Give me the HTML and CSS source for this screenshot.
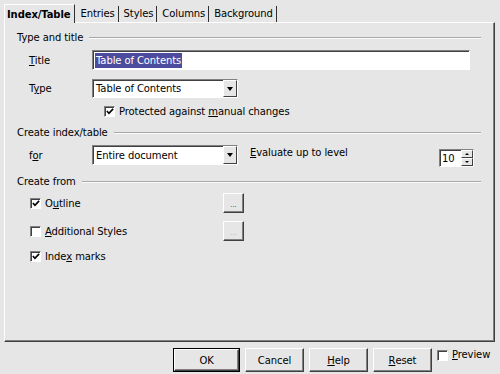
FILE: index.html
```html
<!DOCTYPE html>
<html lang="en">
<head>
    <meta charset="UTF-8">
    <title>Insert Index/Table</title>
    <link rel="stylesheet" href="styles.css">
</head>
<body>
    <div class="tabs">
        <span class="tab active">Index/Table</span>
        <span class="tab">Entries</span>
        <span class="tab">Styles</span>
        <span class="tab">Columns</span>
        <span class="tab">Background</span>
    </div>

    <div class="panel">
        <div class="group-title g1"><span>Type and title</span></div>
        <div class="row row-title">
            <span class="label"><u>T</u>itle</span>
            <div class="field field-wide"><span class="selected">Table of Contents</span></div>
        </div>
        <div class="row row-type">
            <span class="label">T<u>y</u>pe</span>
            <div class="combo">
                <span class="combo-text">Table of Contents</span>
                <span class="combo-btn"><i class="arrow-down"></i></span>
            </div>
        </div>
        <div class="row row-protect">
            <span class="check on"><svg width="9" height="9" viewBox="0 0 9 9"><path d="M1 4 L3.3 6.5 L8 1.5" fill="none" stroke="#000" stroke-width="1.8"/></svg></span>
            <span>Protected against <u>m</u>anual changes</span>
        </div>

        <div class="group-title g2"><span>Create index/table</span></div>
        <div class="row row-for">
            <span class="label">f<u>o</u>r</span>
            <div class="combo">
                <span class="combo-text">Entire document</span>
                <span class="combo-btn"><i class="arrow-down"></i></span>
            </div>
            <span class="evaluate"><u>E</u>valuate up to level</span>
            <div class="spin">
                <span class="spin-text">10</span>
                <span class="spin-btns">
                    <span class="spin-btn"><i class="arrow-up"></i></span>
                    <span class="spin-btn"><i class="arrow-down small"></i></span>
                </span>
            </div>
        </div>

        <div class="group-title g3"><span>Create from</span></div>
        <div class="row row-source r1">
            <span class="source">
                <span class="check on"><svg width="9" height="9" viewBox="0 0 9 9"><path d="M1 4 L3.3 6.5 L8 1.5" fill="none" stroke="#000" stroke-width="1.8"/></svg></span>
                <span>O<u>u</u>tline</span>
            </span>
            <span class="dots-btn">...</span>
        </div>
        <div class="row row-source r2">
            <span class="source">
                <span class="check"></span>
                <span><u>A</u>dditional Styles</span>
            </span>
            <span class="dots-btn disabled">...</span>
        </div>
        <div class="row row-marks">
            <span class="check on"><svg width="9" height="9" viewBox="0 0 9 9"><path d="M1 4 L3.3 6.5 L8 1.5" fill="none" stroke="#000" stroke-width="1.8"/></svg></span>
            <span>Inde<u>x</u> marks</span>
        </div>
    </div>

    <div class="buttons">
        <span class="btn default"><span class="btn-inner">OK</span></span>
        <span class="btn">Cancel</span>
        <span class="btn"><u>H</u>elp</span>
        <span class="btn"><u>R</u>eset</span>
        <span class="preview">
            <span class="check"></span>
            <span><u>P</u>review</span>
        </span>
    </div>
</body>
</html>
```

FILE: styles.css
```css
body {
    margin: 0;
    width: 500px;
    height: 374px;
    background: #e6e6e6;
    font-family: "DejaVu Sans", Verdana, sans-serif;
    font-size: 10px;
    letter-spacing: -0.1px;
    color: #000;
    overflow: hidden;
}
u {
    text-decoration: underline;
    text-underline-offset: 1px;
}

/* tab strip */
.tabs {
    display: flex;
    align-items: flex-end;
    height: 22px;
    padding-left: 4px;
}
.tab {
    height: 16px;
    line-height: 16px;
    padding: 0 3px 0 5px;
    border-right: 1px solid #303030;
}
.tab.active {
    font-weight: bold;
    height: 18px;
    line-height: 20px;
    padding: 0 4px 0 2px;
    border-left: 1px solid #fff;
    border-top: 1px solid #fff;
    position: relative;
    top: 1px;
    background: #e6e6e6;
}

/* tab page */
.panel {
    box-sizing: border-box;
    width: 491px;
    height: 320px;
    margin-left: 4px;
    padding: 0 13px 0 12px;
    border-top: 1px solid #fff;
    border-left: 1px solid #fff;
    border-right: 1px solid #404040;
    border-bottom: 1px solid #404040;
    box-shadow: inset -1px -1px 0 #808080;
}
.group-title {
    display: flex;
    align-items: center;
    height: 14px;
    line-height: 14px;
}
.group-title::after {
    content: "";
    flex: 1;
    margin-left: 6px;
    border-top: 1px solid #a8a8a8;
    border-bottom: 1px solid #fbfbfb;
}
.g1 { margin-top: 8px; }
.g2 { margin-top: 8px; }
.g3 { margin-top: 10px; }

.row {
    display: flex;
    align-items: center;
}
.label {
    width: 63px;
    padding-left: 12px;
}
.row-title { height: 20px; margin-top: 5px; }
.row-type { height: 19px; margin-top: 9px; }
.row-protect { height: 14px; margin-top: 6px; padding-left: 87px; gap: 4px; }
.row-for { height: 20px; margin-top: 5px; align-items: flex-start; }
.row-for .label { align-self: center; }
.row-source { height: 20px; }
.row-source.r1 { margin-top: 4px; }
.row-source.r2 { margin-top: 8px; }
.row-marks { height: 14px; margin-top: 8px; padding-left: 13px; gap: 4px; }

/* sunken fields */
.field, .combo, .spin {
    box-sizing: border-box;
    background: #fff;
    border-top: 1px solid #808080;
    border-left: 1px solid #808080;
    border-right: 1px solid #fff;
    border-bottom: 1px solid #fff;
    box-shadow: inset 1px 1px 0 #404040;
    display: flex;
    align-items: center;
}
.field-wide {
    width: 378px;
    height: 20px;
    padding-left: 2px;
}
.selected {
    background: #4c4c9e;
    color: #fff;
    line-height: 15px;
    padding: 0 1px;
}
.combo {
    width: 146px;
    height: 19px;
    padding-left: 2px;
    justify-content: space-between;
}
.row-for .combo { height: 20px; }
.combo-text { padding-left: 1px; }
.combo-btn {
    box-sizing: border-box;
    width: 14px;
    height: 100%;
    background: #e6e6e6;
    border-top: 1px solid #fff;
    border-left: 1px solid #fff;
    border-right: 1px solid #404040;
    border-bottom: 1px solid #404040;
    display: flex;
    align-items: center;
    justify-content: center;
}
.arrow-down {
    width: 0;
    height: 0;
    border-left: 3px solid transparent;
    border-right: 3px solid transparent;
    border-top: 4px solid #000;
}
.arrow-down.small {
    border-left-width: 2px;
    border-right-width: 2px;
    border-top-width: 2px;
}
.arrow-up {
    width: 0;
    height: 0;
    border-left: 2px solid transparent;
    border-right: 2px solid transparent;
    border-bottom: 2px solid #000;
}

.evaluate {
    margin-left: 12px;
    line-height: 14px;
    margin-top: 1px;
}
.spin {
    margin-left: auto;
    margin-right: 7px;
    margin-top: 4px;
    width: 35px;
    height: 18px;
    padding-left: 2px;
    justify-content: space-between;
}
.spin-btns {
    display: flex;
    flex-direction: column;
    width: 12px;
    height: 100%;
}
.spin-btn {
    flex: 1;
    box-sizing: border-box;
    background: #e6e6e6;
    border-top: 1px solid #fff;
    border-left: 1px solid #fff;
    border-right: 1px solid #404040;
    border-bottom: 1px solid #404040;
    display: flex;
    align-items: center;
    justify-content: center;
}

/* check boxes */
.check {
    box-sizing: border-box;
    width: 11px;
    height: 11px;
    background: #fff;
    border-top: 1px solid #808080;
    border-left: 1px solid #808080;
    border-right: 1px solid #fff;
    border-bottom: 1px solid #fff;
    box-shadow: inset 1px 1px 0 #404040;
    display: flex;
    align-items: center;
    justify-content: center;
    flex: none;
}
.check svg { margin: 1px 0 0 1px; }

.source {
    display: flex;
    align-items: center;
    gap: 4px;
    width: 206px;
    box-sizing: border-box;
    padding-left: 13px;
}
.dots-btn, .btn {
    box-sizing: border-box;
    background: #e6e6e6;
    border-top: 1px solid #fff;
    border-left: 1px solid #fff;
    border-right: 1px solid #404040;
    border-bottom: 1px solid #404040;
    box-shadow: inset -1px -1px 0 #808080;
    display: flex;
    align-items: center;
    justify-content: center;
}
.dots-btn {
    width: 21px;
    height: 20px;
    font-size: 7px;
    color: #404040;
    padding-top: 4px;
}
.dots-btn.disabled { color: #b0b0b0; }

/* bottom buttons */
.buttons {
    display: flex;
    align-items: flex-start;
    margin-top: 6px;
    padding-left: 173px;
}
.btn {
    width: 59px;
    height: 24px;
    margin-right: 5px;
}
.btn.default {
    width: 67px;
    border: 1px solid #000;
    box-shadow: none;
}
.btn-inner {
    box-sizing: border-box;
    width: 100%;
    height: 100%;
    border-top: 1px solid #fff;
    border-left: 1px solid #fff;
    border-right: 1px solid #404040;
    border-bottom: 1px solid #404040;
    box-shadow: inset -1px -1px 0 #808080;
    display: flex;
    align-items: center;
    justify-content: center;
}
.preview {
    display: flex;
    align-items: center;
    gap: 4px;
    margin-top: 1px;
    line-height: 12px;
}
```
